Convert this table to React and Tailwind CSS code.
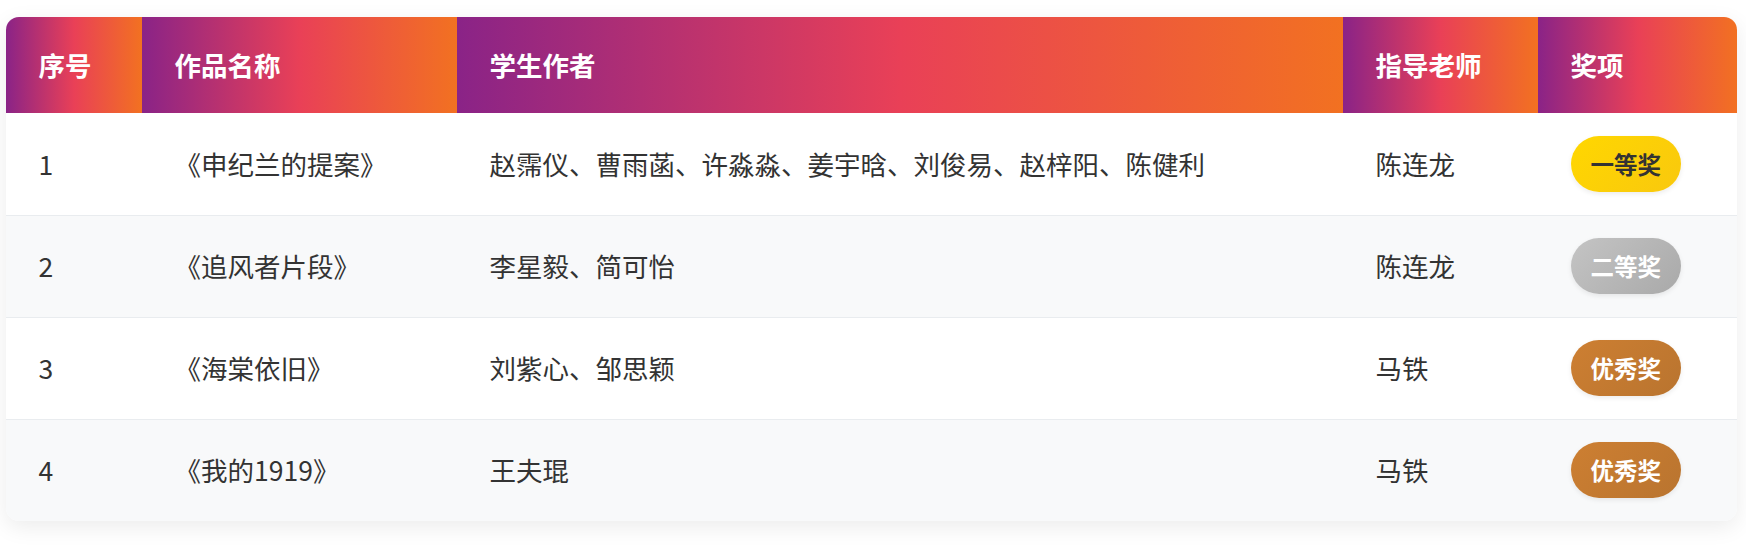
import React from "react";

// ==============================
// DATA
// ==============================
const rows = [
  { id: 1, title: "《申纪兰的提案》", authors: "赵霈仪、曹雨菡、许淼淼、姜宇晗、刘俊易、赵梓阳、陈健利", teacher: "陈连龙", award: "一等奖", level: "gold" },
  { id: 2, title: "《追风者片段》", authors: "李星毅、简可怡", teacher: "陈连龙", award: "二等奖", level: "silver" },
  { id: 3, title: "《海棠依旧》", authors: "刘紫心、邹思颖", teacher: "马铁", award: "优秀奖", level: "bronze" },
  { id: 4, title: "《我的1919》", authors: "王夫琨", teacher: "马铁", award: "优秀奖", level: "bronze" },
];

const badgeStyle = {
  gold: "bg-[linear-gradient(135deg,#ffd700,#f9c80e)] text-[#333]",
  silver: "bg-[linear-gradient(135deg,#c4c4c4,#a9a9a9)] text-white",
  bronze: "bg-[linear-gradient(135deg,#cd7f32,#b9742f)] text-white",
};

const headers = [
  { label: "序号", w: "w-[136px]" },
  { label: "作品名称", w: "w-[315px]" },
  { label: "学生作者", w: "w-[886px]" },
  { label: "指导老师", w: "w-[195px]" },
  { label: "奖项", w: "w-[200px]" },
];

export default function App() {
  return (
    <div className="min-h-[558px] bg-white pt-[17px] pl-[5.6px] pr-[8.6px] font-['Noto_Sans_CJK_SC','Noto_Sans',sans-serif]">
      <div className="overflow-hidden rounded-[13px] bg-white shadow-[0_6px_22px_rgba(0,0,0,0.08)]">
        <table className="w-full table-fixed border-collapse text-left">
          <thead>
            <tr>
              {headers.map(h => (
                <th
                  key={h.label}
                  className={`${h.w} bg-[linear-gradient(90deg,#8a2387,#e94057,#f27121)] px-[33px] py-[29px] text-[26.5px] leading-[38px] font-bold text-white`}
                >
                  {h.label}
                </th>
              ))}
            </tr>
          </thead>
          <tbody>
            {rows.map((r, i) => (
              <tr
                key={r.id}
                className={`${i % 2 === 1 ? "bg-[#f8f9fa]" : "bg-white"} ${i < rows.length - 1 ? "border-b border-[#e9ecef]" : ""} h-[102px] text-[26.5px] leading-[38px] text-[#333]`}
              >
                <td className="px-[33px] py-0 align-middle">{r.id}</td>
                <td className="px-[33px] py-0 align-middle">{r.title}</td>
                <td className="px-[33px] py-0 align-middle">{r.authors}</td>
                <td className="px-[33px] py-0 align-middle">{r.teacher}</td>
                <td className="px-[33px] py-0 align-middle">
                  <span className={`inline-block rounded-full px-[20px] py-[10px] text-[23.5px] leading-[36px] font-bold align-middle shadow-[0_2px_5px_rgba(0,0,0,0.08)] ${badgeStyle[r.level]}`}>
                    {r.award}
                  </span>
                </td>
              </tr>
            ))}
          </tbody>
        </table>
      </div>
    </div>
  );
}
